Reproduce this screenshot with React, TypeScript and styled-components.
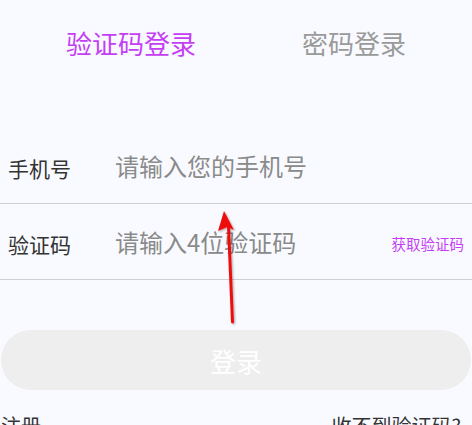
import React from "react";
import styled, { createGlobalStyle } from "styled-components";

const GlobalStyle = createGlobalStyle`
  html, body {
    margin: 0;
    padding: 0;
    background: #f9faff;
    overflow: hidden;
  }
  body {
    font-family: "Noto Sans CJK SC", "Noto Sans", sans-serif;
  }
`;

const Page = styled.div`
  position: relative;
  width: 472px;
  height: 425px;
  background: #f9faff;
  overflow: hidden;
`;

const Tabs = styled.div`
  display: flex;
  align-items: center;
  height: 85px;
  padding-left: 66px;
  gap: 106px;
`;

const Tab = styled.div<{ $active?: boolean }>`
  font-size: 26px;
  line-height: 30px;
  color: ${(p) => (p.$active ? "#c43ff4" : "#9a9a9a")};
`;

const Form = styled.div`
  margin-top: 43px;
  display: flex;
  flex-direction: column;
`;

const Row = styled.div`
  display: flex;
  align-items: center;
  height: 75px;
  border-bottom: 1px solid #cfcfd3;
`;

const Label = styled.span`
  width: 107px;
  padding-left: 8px;
  font-size: 21px;
  color: #333;
  flex-shrink: 0;
  margin-top: 4px;
`;

const Input = styled.span`
  flex: 1;
  font-size: 24px;
  color: #8a8a8a;
`;

const CodeLink = styled.span`
  font-size: 14.5px;
  color: #c43ff4;
  padding-right: 8px;
  margin-top: 4px;
`;

const LoginButton = styled.div`
  margin: 50px 1px 0 1px;
  height: 60px;
  border-radius: 30px;
  background: #eeeeee;
  display: flex;
  align-items: center;
  justify-content: center;
  font-size: 26px;
  color: #ffffff;
`;

const Footer = styled.div`
  display: flex;
  justify-content: space-between;
  padding: 0 11px 0 1px;
  margin-top: 22px;
  font-size: 20px;
  line-height: 28px;
  color: #333;
`;

const Arrow = styled.svg`
  position: absolute;
  left: 0;
  top: 0;
  pointer-events: none;
`;

export default function App() {
  return (
    <>
      <GlobalStyle />
      <Page>
        <Tabs>
          <Tab $active>验证码登录</Tab>
          <Tab>密码登录</Tab>
        </Tabs>
        <Form>
          <Row>
            <Label>手机号</Label>
            <Input>请输入您的手机号</Input>
          </Row>
          <Row>
            <Label>验证码</Label>
            <Input>请输入4位验证码</Input>
            <CodeLink>获取验证码</CodeLink>
          </Row>
          <LoginButton>登录</LoginButton>
          <Footer>
            <span>注册</span>
            <span>收不到验证码?</span>
          </Footer>
        </Form>
        <Arrow width="472" height="425" viewBox="0 0 472 425">
          <defs>
            <filter id="shadow" x="-50%" y="-50%" width="200%" height="200%">
              <feDropShadow dx="1" dy="1" stdDeviation="1" floodColor="#000" floodOpacity="0.35" />
            </filter>
          </defs>
          <g filter="url(#shadow)">
            <line x1="228.5" y1="226" x2="232.5" y2="322" stroke="#ee1111" strokeWidth="3" strokeLinecap="round" />
            <polygon points="224,211 234,230 227.5,227 218,231" fill="#ee1111" />
          </g>
        </Arrow>
      </Page>
    </>
  );
}
